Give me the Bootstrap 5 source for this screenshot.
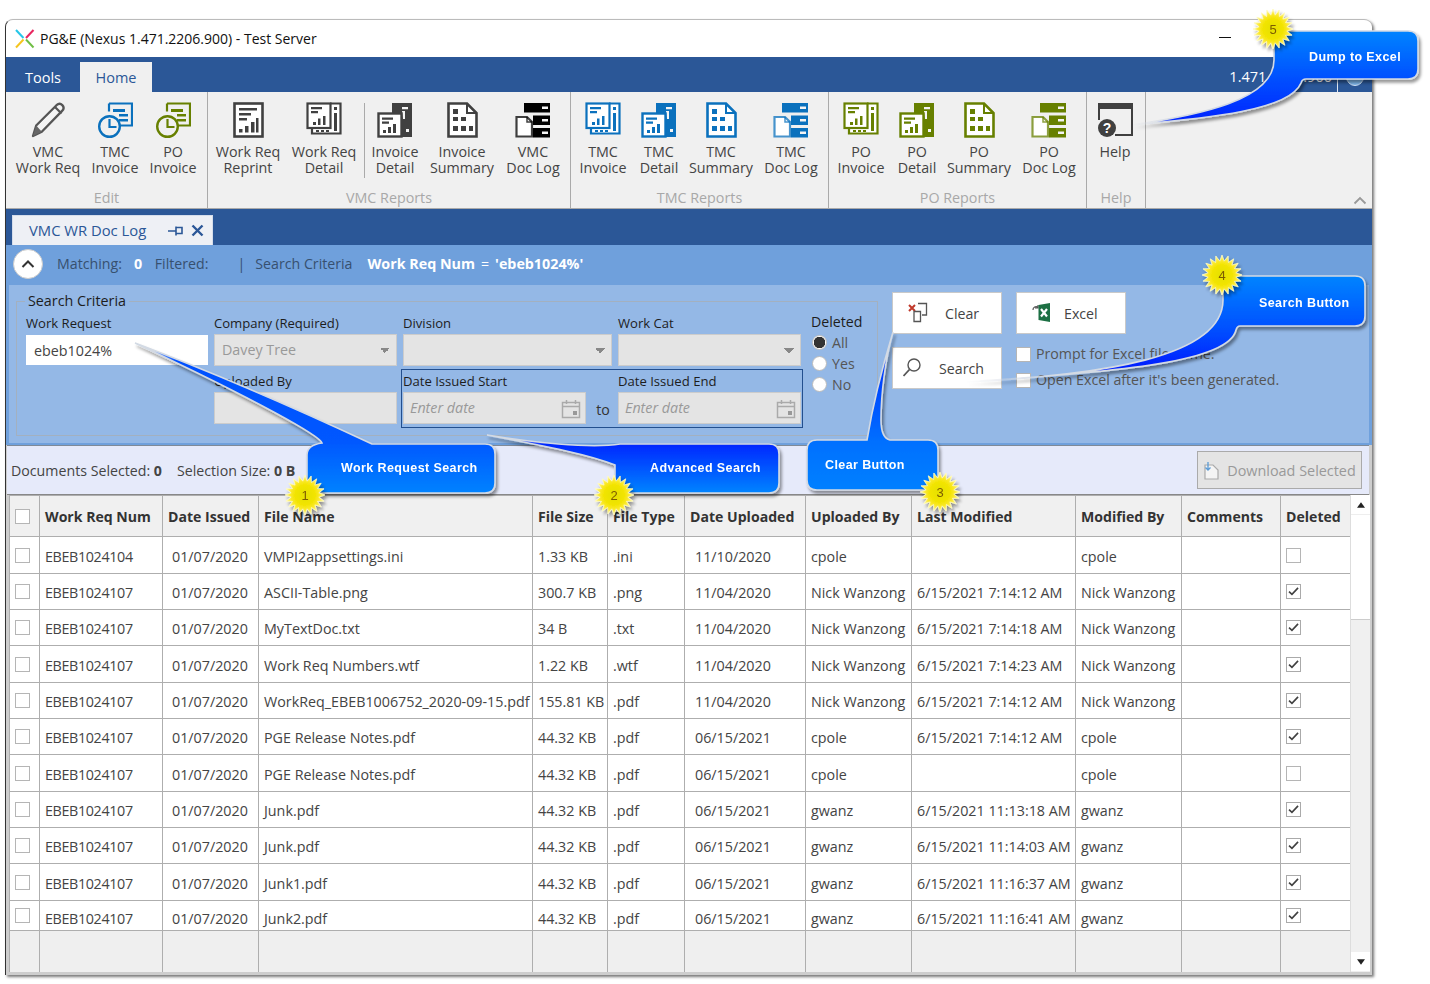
<!DOCTYPE html>
<html lang="en">
<head>
<meta charset="utf-8">
<title>PG&amp;E Nexus</title>
<link href="https://cdn.jsdelivr.net/npm/bootstrap@5.3.0/dist/css/bootstrap.min.css" rel="stylesheet">
<script src="https://cdn.jsdelivr.net/npm/bootstrap@5.3.0/dist/js/bootstrap.bundle.min.js"></script>
<style>
:root{--navy:#2b5797;--sum:#6fa0dc;--pan:#94b8e6;--txt:#444;}
html,body{margin:0;height:984px;width:1430px;overflow:hidden;background:#fff;}
body{position:relative;font-family:"Open Sans","Noto Sans",sans-serif;font-size:14.2px;color:var(--txt);}
.app-win{width:1367px;height:956px;margin:19px 0 0 5px;border-top:1px solid #bbb;border-left:1px solid #333;border-top-left-radius:8px;border-top-right-radius:8px;background:#cdcdcd;box-shadow:2px 2px 3px #777;overflow:hidden;}
.title-row{height:37px;background:#fff;padding-left:9px;color:#111;font-size:14px;}
.logo-s{margin-right:5px;flex:none;}
.title-row .winmin{margin-left:auto;margin-right:141px;width:12px;height:1px;background:#111;margin-top:-2px;}
.tab-row{height:35px;background:var(--navy);color:#fff;padding-top:5px;font-size:14.5px;}
.tab-row .nav-link{padding:0;height:30px;line-height:31px;color:#fff;}
.tab-row .t1{width:74px;text-align:center;margin-right:0;}
.tab-row .t2{width:72px;text-align:center;background:#f0f0f0;color:var(--navy);}
.ver{margin-left:auto;line-height:30px;padding-right:5px;}
.ver-sep{border-left:1px solid #dfe7f3;height:30px;width:35px;display:flex;align-items:center;justify-content:center;}
.ver-dot{width:18px;height:18px;border-radius:50%;background:#7db4e8;border:1px solid #cfe1f5;}
.ribbon{height:117px;background:#f0f0f0;border-bottom:1px solid #aaa;font-size:14.3px;}
.rb-grp{border-right:1px solid #aaa;height:116px;display:flex;flex-direction:column;flex:none;}
.rb-btns{display:flex;height:98px;padding-top:10px;}
.rb-name{text-align:center;color:#a8a8a8;line-height:16px;}
.rb-b{flex:none;display:flex;flex-direction:column;align-items:center;color:#444;line-height:16px;text-align:center;}
.rb-b svg{width:36px;height:36px;margin-bottom:6px;flex:none;}
.c-l{color:#444;}
.rb-sep{flex:none;width:8px;display:flex;justify-content:center;padding-top:1px;}
.rb-sep i{display:block;width:1px;height:75px;background:#aaa;}
.g1{width:202px;}.g2{width:363px;}.g3{width:258px;}.g4{width:258px;}.g5{width:59px;}
.pl-6{padding-left:6px;}.pl-4{padding-left:4px;}
.w54{width:54px;}.w56{width:56px;}.w62{width:62px;}.w68{width:68px;}.w72{width:72px;}.w80{width:80px;}
.c-vmc{color:#404040;}.c-tmc{color:#0b71bd;}.c-po{color:#678000;}
.rb-end{flex:1;display:flex;justify-content:flex-end;align-items:flex-end;padding:0 5px 3px 0;}
.doc-row{height:36px;background:var(--navy);padding:6px 0 0 6px;}
.doc-tab{width:201px;height:30px;background:#eef0f5;border:1px solid #d5ddeb;border-bottom:0;color:var(--navy);display:flex;align-items:center;padding-left:16px;font-size:14.8px;}
.doc-tab svg{flex:none;}
.doc-tab .pin-i{margin-left:auto;margin-right:8px;}
.doc-tab .x-i{margin-right:8px;}
.sum-row{height:40px;background:var(--sum);color:#37506f;padding:0 0 3px 7px;}
.roundbtn{width:30px;height:30px;padding:0;border-radius:50%;background:#fff;border:1px solid #ccc;display:flex;align-items:center;justify-content:center;margin-right:14px;}
.wh{color:#fff;font-weight:700;font-size:14.3px;}
.wh-n{color:#fff;margin:0 6px;}
.sum-row span{white-space:pre;}
.sm-a{margin-left:12px;}.sm-b{margin-left:9px;}.sm-c{margin-left:29px;}.sm-d{margin-left:10px;}.sm-e{margin-left:15px;}
.panel-zone{height:160px;background:var(--sum);padding:0 3px 2px 3px;}
.panel-in{height:158px;background:var(--pan);padding:7px 0 0 7px;display:flex;color:#1d1d1d;}
.crit{position:relative;width:862px;height:135px;margin-top:9px;border:1px solid #a3b0bf;padding:6px 0 0 9px;flex:none;}
.crit-legend{position:absolute;left:8px;top:-10px;background:var(--pan);padding:0 3px;line-height:18px;color:#1d1d1d;font-size:14.3px;}
.crit-grid{display:grid;grid-template-columns:182px 183px 209px 183px 60px;column-gap:6px;grid-template-rows:58px 60px;}
.fld-l{font-size:13.1px;line-height:15px;color:#1d1d1d;height:18px;margin-top:8px;}
.fld-i.form-control,.fld-i.form-select{height:32px;border-radius:0;font-size:14.3px;padding:0 7px;color:#444;border:1px solid #ccc;background-color:#e4e4e4;}
.fld-i.form-select{background-image:linear-gradient(45deg,transparent 50%,#888 50%),linear-gradient(-45deg,transparent 50%,#888 50%);background-size:5px 5px;background-position:right 11px center,right 6px center;background-repeat:no-repeat;color:#999;}
.fld-i.wht{background:#fff;border-color:#fff;height:30px;margin-top:1px;}
.fld-i::placeholder{font-style:italic;color:#999;}
.date-box{grid-column:3 / 5;margin:3px -2px 0 -2px;height:59px;border:1px solid #234f8e;padding:0 1px;}
.date-box .dt-cols{display:grid;grid-template-columns:183px 32px 183px;}
.date-box .fld-l{margin-top:4px;}
.date-box .fld-i.form-control{padding:0 6px 2px;}
.dt-wrap{position:relative;}
.dt-wrap svg{position:absolute;right:5px;top:7px;}
.to-lbl{padding:29px 0 0 2px;text-align:center;color:#333;}
.del-col{grid-row:1 / 3;grid-column:5;padding:2px 0 0 4px;}
.del-col .del-t{line-height:16px;margin-top:4px;margin-bottom:2px;}
.form-check-input.rd{width:15px;height:15px;margin:0 0 0 1px;border:1px solid #bbb;}
.form-check-input.rd:checked{background-color:#fff;border-color:#bbb;background-image:radial-gradient(circle,#333 5.5px,#fff 6px);}
.rd-row{display:flex;align-items:center;gap:5px;height:21px;color:#555;}
.act-grid{margin-left:14px;display:grid;grid-template-columns:110px 110px;column-gap:14px;grid-template-rows:42px auto;row-gap:13px;}
.act-b.btn{width:110px;height:42px;background:#fff;border:1px solid #c9c9c9;border-radius:0;padding:2px 0 0;color:#444;font-size:14.2px;display:flex;align-items:center;}
.act-b svg{flex:none;margin:-2px 15px 0;}
.act-b .ic-x{margin-right:10px;}
.act-b .ic-s{margin:-2px 14px 0 10px;}
.form-check-input.cb{width:15px;height:15px;margin:0;border:1px solid #b5b5b5;border-radius:0;background-color:#fff;flex:none;}
.form-check-input.cb:checked{background-color:#fff;border-color:#aaa;background-size:100% 100%;background-image:url("data:image/svg+xml,%3Csvg xmlns='http://www.w3.org/2000/svg' viewBox='0 0 16 16'%3E%3Cpath d='M2.5 8.2l3.6 3.4L13.6 3.6' fill='none' stroke='%23404040' stroke-width='2'/%3E%3C/svg%3E");}
.opt-col{display:flex;flex-direction:column;gap:10px;margin-top:-1px;}
.opt-row{display:flex;align-items:center;gap:5px;height:16px;white-space:nowrap;color:#555;width:300px;}
.sel-row{height:50px;background:#e6eafa;border-top:1px solid #7f8a98;border-bottom:1px solid #888;margin-left:1px;margin-right:3px;padding:0 7px 0 4px;}
.sel-row b{font-weight:700;}
.sel-t{padding-top:2px;}
.sel-t2{margin-left:15px;}
.dl-btn.btn{width:165px;height:38px;border-radius:0;background:#e4e4e4;border:1px solid #aaa;color:#999;font-size:14.4px;padding:1px 0 0;display:flex;align-items:center;justify-content:center;gap:7px;opacity:1;white-space:nowrap;}
.grid-zone{height:477px;padding-left:3px;padding-right:2px;}
.grid-scroll{width:1341px;height:477px;background:#efefef;overflow:hidden;flex:none;position:relative;}
.dg.table{table-layout:fixed;width:1342px;margin:0;border-collapse:collapse;--bs-table-bg:transparent;--bs-table-border-color:#aeaeae;color:var(--txt);}
.dg th,.dg td{padding:0 0 0 5px;border:1px solid #aeaeae;font-weight:400;white-space:nowrap;overflow:hidden;vertical-align:middle;font-size:14.3px;box-shadow:none;}
.dg thead th{height:41px;background:#f0f0f0;font-weight:700;color:#333;padding-top:2px;font-size:14.1px;}
.dg tbody tr.dr td{background:#fff;height:36px;padding-top:3px;}
.dg tbody tr.dr td:nth-child(2){letter-spacing:-.35px;}
.dg tbody tr.dr:nth-child(3n+1) td{height:37px;}
.dg tbody tr.lastr td{height:30px;padding-top:7px;}
.dg tbody tr.fill td{height:42px;background:#efefef;}
.dg td.pd{padding-left:9px;}
.dg td.pu{padding-left:10px;}
.dg thead th.chk,.dg tbody tr.dr td.chk{padding:0 0 0 5px;}
.dg td.chk .form-check-input,.dg th.chk .form-check-input{display:block;margin-top:0;}
.sb{width:20px;height:477px;background:#f0f0f0;border-left:1px solid #ddd;display:flex;flex-direction:column;flex:none;}
.sb-a{height:20px;background:#fff;border-bottom:1px solid #eee;display:flex;align-items:center;justify-content:center;flex:none;}
.sb-t{height:105px;background:#fff;border-bottom:1px solid #ccc;flex:none;}
.sb-s{flex:1;}
.overlay{position:absolute;left:0;top:0;width:1430px;height:984px;pointer-events:none;}
.bb{font-family:"Liberation Sans",Arial,sans-serif;font-weight:700;font-size:12.5px;fill:#fff;letter-spacing:.4px;}
.sn{font-family:"Liberation Sans",sans-serif;font-size:13px;fill:#7d5c00;text-anchor:middle;}
</style>
</head>
<body>
<svg width="0" height="0" class="position-absolute">
<defs>
<symbol id="i-pencil" viewBox="0 0 36 36"><path d="M3 34l3.2-10.5L26.5 3.2c2-1.8 4.2-1.8 5.8-.1 1.7 1.8 1.600 4-.2 5.800L11.800 29.800z" fill="#f4f4f4" stroke="#555" stroke-width="2.300" stroke-linejoin="round"/><path d="M3 34l3.200-10.500 5.600 6.300z" fill="#666"/><path d="M25 5l6.500 6.500" stroke="#555" stroke-width="2.200"/></symbol>
<symbol id="i-clock" viewBox="0 0 36 36"><path d="M12 1.500h23v22H20M12 1.500v8" fill="none" stroke="currentColor" stroke-width="2.200"/><path d="M16 7h12v3H16zM22 12h9v2.500h-9zM22 17h9v2.500h-9z" fill="currentColor"/><circle cx="12.500" cy="24.500" r="10.300" fill="#f0f0f0" stroke="currentColor" stroke-width="2.400"/><path d="M12.500 17v8h7" fill="none" stroke="currentColor" stroke-width="2.200"/></symbol>
<symbol id="i-report" viewBox="0 0 36 36"><rect x="4.500" y="1.500" width="28" height="33" fill="#fff" stroke="currentColor" stroke-width="2.600"/><path d="M9 6h18v2.500H9zM9 11h12v2.500H9zM9 16h8v2.500H9zM9 27h3.500v3.500H9zM15 24h3.500v6.500H15zM21 20h3.500v10.500H21zM26 16h2.500v14.500H26z" fill="currentColor"/></symbol>
<symbol id="i-multi" viewBox="0 0 36 36"><path d="M24 1.500h10.500v30H6V26" fill="#fff" stroke="currentColor" stroke-width="2.200"/><rect x="1.500" y="1.500" width="23" height="24.500" fill="#fff" stroke="currentColor" stroke-width="2.200"/><path d="M5 5h11v2.300H5zM5 9h7v2.300H5zM7 20h3v3H7zM12 16.500h2.500v6.500H12zM17 14h2.500v9H17zM28 5h3v3h-3zM28 11h3v18h-3zM10 28h3v2h-3zM15 28h3v2h-3zM20 28h3v2h-3z" fill="currentColor"/></symbol>
<symbol id="i-inv" viewBox="0 0 36 36"><path d="M15 1h20v34H15z" fill="currentColor"/><path d="M25 5h6v2.200h-6zM25 9h3v8h-2zM29 27h3v3h-3z" fill="#f4f4f4"/><rect x="1.500" y="11.500" width="23" height="23" fill="#fff" stroke="currentColor" stroke-width="2.400"/><path d="M5 15.500h11v2.300H5zM5 19.500h7v2.300H5zM6 28h3v3H6zM11 25h3v6h-3zM16 22h3v9h-3z" fill="currentColor"/></symbol>
<symbol id="i-sum" viewBox="0 0 36 36"><path d="M4.500 1.500H23l9.500 9.500v23.500h-28z" fill="#fff" stroke="currentColor" stroke-width="2.600"/><path d="M23 1.500v9.500h9.500" fill="none" stroke="currentColor" stroke-width="2"/><path d="M9 7h5v5H9zM9 15h5v4H9zM17 15h5v4h-5zM9 24h5v5H9zM17 24h5v5h-5zM25 24h4v5h-4z" fill="currentColor"/></symbol>
<symbol id="i-log" viewBox="0 0 36 36"><path d="M9 1h26v9.500H9zM18 13.500h17v9.500H18zM18 26h17v9.500H18z" fill="currentColor"/><path d="M27 4.500h6v2.500h-6zM27 17h6v2.500h-6zM27 29.500h6V32h-6z" fill="#f4f4f4"/><path d="M1.500 15H12l5 5v14.500H1.500z" fill="#fff" stroke="currentColor" stroke-opacity=".75" stroke-width="2.200"/><path d="M12 15v5h5" fill="none" stroke="currentColor" stroke-opacity=".75" stroke-width="1.500"/></symbol>
<symbol id="i-help" viewBox="0 0 36 36"><path d="M2 5v13M35 4v29H18" fill="none" stroke="#404040" stroke-width="2"/><path d="M1 1h35v6H1z" fill="#404040"/><circle cx="10" cy="26" r="9" fill="#404040"/><text x="10" y="31" text-anchor="middle" font-family="Liberation Sans" font-weight="700" font-size="14" fill="#fff">?</text></symbol>
<symbol id="i-cal" viewBox="0 0 20 20"><rect x="1.500" y="3.500" width="17" height="15" fill="none" stroke="#aaa" stroke-width="1.500"/><path d="M1.500 7.500h17" stroke="#aaa" stroke-width="1.500"/><path d="M5.500 1v4M14.500 1v4" stroke="#aaa" stroke-width="1.500"/><rect x="12" y="12" width="4" height="4" fill="#999"/></symbol>
<symbol id="i-star" viewBox="-22 -22 44 44"><polygon points="20,0 13.83,2.19 19.02,6.18 12.47,6.36 16.18,11.76 9.9,9.9 11.76,16.18 6.36,12.47 6.18,19.02 2.19,13.83 0,20 -2.19,13.83 -6.18,19.02 -6.36,12.47 -11.76,16.18 -9.9,9.9 -16.18,11.76 -12.47,6.36 -19.02,6.18 -13.83,2.19 -20,0 -13.83,-2.19 -19.02,-6.18 -12.47,-6.36 -16.18,-11.76 -9.9,-9.9 -11.76,-16.18 -6.36,-12.47 -6.18,-19.02 -2.19,-13.83 0,-20 2.19,-13.83 6.18,-19.02 6.36,-12.47 11.76,-16.18 9.9,-9.9 16.18,-11.76 12.47,-6.36 19.02,-6.18 13.83,-2.19" fill="url(#gstar)" stroke="#fffbc0" stroke-width=".8"/></symbol>
<radialGradient id="gstar" gradientUnits="userSpaceOnUse" cx="0" cy="0" r="20"><stop offset="0" stop-color="#e4e000"/><stop offset=".5" stop-color="#f2e400"/><stop offset=".72" stop-color="#fbe92c"/><stop offset="1" stop-color="#fff7a8"/></radialGradient>
</defs>
</svg>

<div class="app-win d-flex flex-column">
  <div class="title-row d-flex align-items-center">
    <svg width="20" height="20" viewBox="0 0 20 20" class="logo-s"><path d="M1 1l7.500 8" stroke="#25c6e8" stroke-width="2"/><path d="M18.500 1l-7.500 8" stroke="#e8265f" stroke-width="2"/><path d="M1 18.500l7.500-8" stroke="#f5c51e" stroke-width="2"/><path d="M18.500 18.500l-7.500-8" stroke="#6fbe44" stroke-width="2"/></svg>
    <span>PG&amp;E (Nexus 1.471.2206.900) - Test Server</span>
    <div class="winmin"></div>
  </div>
  <div class="tab-row d-flex">
    <ul class="nav w-100">
      <li class="nav-item"><a class="nav-link t1" href="#">Tools</a></li>
      <li class="nav-item"><a class="nav-link t2" href="#">Home</a></li>
      <li class="ver">1.471.2206.900</li>
      <li class="ver-sep"><span class="ver-dot"></span></li>
    </ul>
  </div>
  <div class="ribbon d-flex">
    <div class="rb-grp g1"><div class="rb-btns pl-6">
      <div class="rb-b w72"><svg><use href="#i-pencil"/></svg>VMC<br>Work Req</div>
      <div class="rb-b w62 c-tmc"><svg><use href="#i-clock"/></svg><span class="c-l">TMC<br>Invoice</span></div>
      <div class="rb-b w54 c-po"><svg><use href="#i-clock"/></svg><span class="c-l">PO<br>Invoice</span></div>
    </div><div class="rb-name">Edit</div></div>
    <div class="rb-grp g2"><div class="rb-btns">
      <div class="rb-b w80 c-vmc"><svg><use href="#i-report"/></svg><span class="c-l">Work Req<br>Reprint</span></div>
      <div class="rb-b w72 c-vmc"><svg><use href="#i-multi"/></svg><span class="c-l">Work Req<br>Detail</span></div>
      <div class="rb-sep"><i></i></div>
      <div class="rb-b w54 c-vmc"><svg><use href="#i-inv"/></svg><span class="c-l">Invoice<br>Detail</span></div>
      <div class="rb-b w80 c-vmc"><svg><use href="#i-sum"/></svg><span class="c-l">Invoice<br>Summary</span></div>
      <div class="rb-b w62"><svg class="text-black"><use href="#i-log"/></svg>VMC<br>Doc Log</div>
    </div><div class="rb-name">VMC Reports</div></div>
    <div class="rb-grp g3"><div class="rb-btns pl-4">
      <div class="rb-b w56 c-tmc"><svg><use href="#i-multi"/></svg><span class="c-l">TMC<br>Invoice</span></div>
      <div class="rb-b w56 c-tmc"><svg><use href="#i-inv"/></svg><span class="c-l">TMC<br>Detail</span></div>
      <div class="rb-b w68 c-tmc"><svg><use href="#i-sum"/></svg><span class="c-l">TMC<br>Summary</span></div>
      <div class="rb-b w72 c-tmc"><svg><use href="#i-log"/></svg><span class="c-l">TMC<br>Doc Log</span></div>
    </div><div class="rb-name">TMC Reports</div></div>
    <div class="rb-grp g4"><div class="rb-btns pl-4">
      <div class="rb-b w56 c-po"><svg><use href="#i-multi"/></svg><span class="c-l">PO<br>Invoice</span></div>
      <div class="rb-b w56 c-po"><svg><use href="#i-inv"/></svg><span class="c-l">PO<br>Detail</span></div>
      <div class="rb-b w68 c-po"><svg><use href="#i-sum"/></svg><span class="c-l">PO<br>Summary</span></div>
      <div class="rb-b w72 c-po"><svg><use href="#i-log"/></svg><span class="c-l">PO<br>Doc Log</span></div>
    </div><div class="rb-name">PO Reports</div></div>
    <div class="rb-grp g5"><div class="rb-btns">
      <div class="rb-b w56"><svg><use href="#i-help"/></svg>Help</div>
    </div><div class="rb-name">Help</div></div>
    <div class="rb-end"><svg width="14" height="9" viewBox="0 0 14 9"><path d="M1.500 7.500L7 2l5.500 5.500" fill="none" stroke="#999" stroke-width="1.800"/></svg></div>
  </div>
  <div class="doc-row">
    <div class="doc-tab"><span>VMC WR Doc Log</span>
      <svg width="15" height="12" viewBox="0 0 15 12" class="pin-i"><path d="M0 6h8M8 1.500v9M8 2.500h6v6H8" fill="none" stroke="#2b5797" stroke-width="1.600"/></svg>
      <svg width="13" height="13" viewBox="0 0 13 13" class="x-i"><path d="M1.500 1.500l10 10M11.500 1.500l-10 10" stroke="#2b5797" stroke-width="2.400"/></svg>
    </div>
  </div>
  <div class="sum-row d-flex align-items-center">
    <button class="roundbtn" type="button"><svg width="14" height="10" viewBox="0 0 14 10"><path d="M1.500 8L7 2.500 12.500 8" fill="none" stroke="#333" stroke-width="2"/></svg></button>
    <span>Matching:</span><span class="wh sm-a">0</span><span class="sm-b">&nbsp;Filtered:</span><span class="sm-c">|</span><span class="sm-d">Search Criteria</span><span class="wh sm-e">Work Req Num</span><span class="wh-n">=</span><span class="wh">'ebeb1024%'</span>
  </div>
  <div class="panel-zone">
    <div class="panel-in">
      <div class="crit">
        <div class="crit-legend">Search Criteria</div>
        <div class="crit-grid">
          <div><div class="fld-l">Work Request</div><input class="form-control fld-i wht" value="ebeb1024%"></div>
          <div><div class="fld-l">Company (Required)</div><select class="form-select fld-i" disabled><option>Davey Tree</option></select></div>
          <div><div class="fld-l">Division</div><select class="form-select fld-i" disabled><option></option></select></div>
          <div><div class="fld-l">Work Cat</div><select class="form-select fld-i" disabled><option></option></select></div>
          <div class="del-col"><div class="del-t">Deleted</div>
            <div class="rd-row"><input class="form-check-input rd" type="radio" name="d" checked>All</div>
            <div class="rd-row"><input class="form-check-input rd" type="radio" name="d">Yes</div>
            <div class="rd-row"><input class="form-check-input rd" type="radio" name="d">No</div>
          </div>
          <div></div>
          <div><div class="fld-l">Uploaded By</div><input class="form-control fld-i" disabled></div>
          <div class="date-box"><div class="dt-cols">
            <div><div class="fld-l">Date Issued Start</div><div class="dt-wrap"><input class="form-control fld-i" placeholder="Enter date" disabled><svg width="20" height="20"><use href="#i-cal"/></svg></div></div>
            <div class="to-lbl">to</div>
            <div><div class="fld-l">Date Issued End</div><div class="dt-wrap"><input class="form-control fld-i" placeholder="Enter date" disabled><svg width="20" height="20"><use href="#i-cal"/></svg></div></div>
          </div></div>
        </div>
      </div>
      <div class="act-grid">
        <button class="btn act-b" type="button"><svg width="22" height="22" viewBox="0 0 22 22"><path d="M1 3l6 6M7 3L1 9" stroke="#c0392b" stroke-width="2"/><path d="M10 1.500h8.500V13H14" fill="none" stroke="#555" stroke-width="1.300"/><path d="M6 9.500h6.500v10H6z" fill="#fff" stroke="#555" stroke-width="1.300"/></svg>Clear</button>
        <button class="btn act-b" type="button"><svg width="22" height="22" viewBox="0 0 22 22" class="ic-x"><path d="M1 8a3 3 0 0 1 5-2.500M6 3v3H3" fill="none" stroke="#555" stroke-width="1.200"/><path d="M6.500 3L18 1v19L6.500 18z" fill="#1d7044"/><path d="M9 7l6 7.500M15 7l-6 7.500" stroke="#fff" stroke-width="2.200"/></svg>Excel</button>
        <button class="btn act-b" type="button"><svg width="22" height="22" viewBox="0 0 22 22" class="ic-s"><circle cx="11" cy="8" r="6" fill="none" stroke="#555" stroke-width="1.400"/><path d="M6.500 12.500L0.500 19" stroke="#555" stroke-width="1.800"/></svg>Search</button>
        <div class="opt-col">
          <label class="opt-row"><input class="form-check-input cb" type="checkbox">Prompt for Excel file name.</label>
          <label class="opt-row"><input class="form-check-input cb" type="checkbox">Open Excel after it's been generated.</label>
        </div>
      </div>
    </div>
  </div>
  <div class="sel-row d-flex align-items-center">
    <span class="sel-t">Documents Selected: <b>0</b></span><span class="sel-t sel-t2">Selection Size: <b>0 B</b></span>
    <button class="btn dl-btn ms-auto" type="button" disabled><svg width="17" height="18" viewBox="0 0 17 18"><path d="M2 3h8l5 5v9H2z" fill="#f4f4f4" stroke="#aaa" stroke-width="1.200"/><path d="M5 0v8M2.500 5.500L5 8l2.500-2.500" fill="none" stroke="#5b9bd5" stroke-width="1.300"/></svg>Download Selected</button>
  </div>
  <div class="grid-zone d-flex">
    <div class="grid-scroll">
      <table class="table dg">
        <colgroup><col style="width:30px"><col style="width:123px"><col style="width:96px"><col style="width:274px"><col style="width:75px"><col style="width:77px"><col style="width:121px"><col style="width:106px"><col style="width:164px"><col style="width:106px"><col style="width:99px"><col style="width:71px"></colgroup>
        <thead><tr><th class="chk"><input class="form-check-input cb" type="checkbox"></th><th>Work Req Num</th><th>Date Issued</th><th>File Name</th><th>File Size</th><th>File Type</th><th>Date Uploaded</th><th>Uploaded By</th><th>Last Modified</th><th>Modified By</th><th>Comments</th><th>Deleted</th></tr></thead>
        <tbody>
        <tr class="dr"><td class="chk"><input class="form-check-input cb" type="checkbox"></td><td>EBEB1024104</td><td class="pd">01/07/2020</td><td>VMPI2appsettings.ini</td><td>1.33 KB</td><td>.ini</td><td class="pu">11/10/2020</td><td>cpole</td><td></td><td>cpole</td><td></td><td class="chk"><input class="form-check-input cb" type="checkbox"></td></tr>
        <tr class="dr"><td class="chk"><input class="form-check-input cb" type="checkbox"></td><td>EBEB1024107</td><td class="pd">01/07/2020</td><td>ASCII-Table.png</td><td>300.7 KB</td><td>.png</td><td class="pu">11/04/2020</td><td>Nick Wanzong</td><td>6/15/2021 7:14:12 AM</td><td>Nick Wanzong</td><td></td><td class="chk"><input class="form-check-input cb" type="checkbox" checked></td></tr>
        <tr class="dr"><td class="chk"><input class="form-check-input cb" type="checkbox"></td><td>EBEB1024107</td><td class="pd">01/07/2020</td><td>MyTextDoc.txt</td><td>34 B</td><td>.txt</td><td class="pu">11/04/2020</td><td>Nick Wanzong</td><td>6/15/2021 7:14:18 AM</td><td>Nick Wanzong</td><td></td><td class="chk"><input class="form-check-input cb" type="checkbox" checked></td></tr>
        <tr class="dr"><td class="chk"><input class="form-check-input cb" type="checkbox"></td><td>EBEB1024107</td><td class="pd">01/07/2020</td><td>Work Req Numbers.wtf</td><td>1.22 KB</td><td>.wtf</td><td class="pu">11/04/2020</td><td>Nick Wanzong</td><td>6/15/2021 7:14:23 AM</td><td>Nick Wanzong</td><td></td><td class="chk"><input class="form-check-input cb" type="checkbox" checked></td></tr>
        <tr class="dr"><td class="chk"><input class="form-check-input cb" type="checkbox"></td><td>EBEB1024107</td><td class="pd">01/07/2020</td><td>WorkReq_EBEB1006752_2020-09-15.pdf</td><td>155.81 KB</td><td>.pdf</td><td class="pu">11/04/2020</td><td>Nick Wanzong</td><td>6/15/2021 7:14:12 AM</td><td>Nick Wanzong</td><td></td><td class="chk"><input class="form-check-input cb" type="checkbox" checked></td></tr>
        <tr class="dr"><td class="chk"><input class="form-check-input cb" type="checkbox"></td><td>EBEB1024107</td><td class="pd">01/07/2020</td><td>PGE Release Notes.pdf</td><td>44.32 KB</td><td>.pdf</td><td class="pu">06/15/2021</td><td>cpole</td><td>6/15/2021 7:14:12 AM</td><td>cpole</td><td></td><td class="chk"><input class="form-check-input cb" type="checkbox" checked></td></tr>
        <tr class="dr"><td class="chk"><input class="form-check-input cb" type="checkbox"></td><td>EBEB1024107</td><td class="pd">01/07/2020</td><td>PGE Release Notes.pdf</td><td>44.32 KB</td><td>.pdf</td><td class="pu">06/15/2021</td><td>cpole</td><td></td><td>cpole</td><td></td><td class="chk"><input class="form-check-input cb" type="checkbox"></td></tr>
        <tr class="dr"><td class="chk"><input class="form-check-input cb" type="checkbox"></td><td>EBEB1024107</td><td class="pd">01/07/2020</td><td>Junk.pdf</td><td>44.32 KB</td><td>.pdf</td><td class="pu">06/15/2021</td><td>gwanz</td><td>6/15/2021 11:13:18 AM</td><td>gwanz</td><td></td><td class="chk"><input class="form-check-input cb" type="checkbox" checked></td></tr>
        <tr class="dr"><td class="chk"><input class="form-check-input cb" type="checkbox"></td><td>EBEB1024107</td><td class="pd">01/07/2020</td><td>Junk.pdf</td><td>44.32 KB</td><td>.pdf</td><td class="pu">06/15/2021</td><td>gwanz</td><td>6/15/2021 11:14:03 AM</td><td>gwanz</td><td></td><td class="chk"><input class="form-check-input cb" type="checkbox" checked></td></tr>
        <tr class="dr"><td class="chk"><input class="form-check-input cb" type="checkbox"></td><td>EBEB1024107</td><td class="pd">01/07/2020</td><td>Junk1.pdf</td><td>44.32 KB</td><td>.pdf</td><td class="pu">06/15/2021</td><td>gwanz</td><td>6/15/2021 11:16:37 AM</td><td>gwanz</td><td></td><td class="chk"><input class="form-check-input cb" type="checkbox" checked></td></tr>
        <tr class="dr lastr"><td class="chk"><input class="form-check-input cb" type="checkbox"></td><td>EBEB1024107</td><td class="pd">01/07/2020</td><td>Junk2.pdf</td><td>44.32 KB</td><td>.pdf</td><td class="pu">06/15/2021</td><td>gwanz</td><td>6/15/2021 11:16:41 AM</td><td>gwanz</td><td></td><td class="chk"><input class="form-check-input cb" type="checkbox" checked></td></tr>
        <tr class="fill"><td></td><td></td><td></td><td></td><td></td><td></td><td></td><td></td><td></td><td></td><td></td><td></td></tr>
        </tbody>
      </table>
    </div>
    <div class="sb">
      <div class="sb-a"><svg width="8" height="6" viewBox="0 0 10 7"><path d="M5 0l5 7H0z" fill="#222"/></svg></div>
      <div class="sb-t"></div>
      <div class="sb-s"></div>
      <div class="sb-a"><svg width="8" height="6" viewBox="0 0 10 7"><path d="M5 7L0 0h10z" fill="#222"/></svg></div>
    </div>
  </div>
</div>

<svg class="overlay" viewBox="0 0 1430 984">
  <defs>
    <filter id="sh" x="-10%" y="-10%" width="125%" height="130%"><feDropShadow dx="2" dy="3" stdDeviation="1.500" flood-color="#000" flood-opacity=".4"/></filter>
    <linearGradient id="g1" gradientUnits="userSpaceOnUse" x1="0" y1="343" x2="0" y2="493"><stop offset="0" stop-color="#e8f0ff"/><stop offset=".12" stop-color="#0050ff"/><stop offset=".66" stop-color="#0058ff"/><stop offset="1" stop-color="#0082ff"/></linearGradient>
    <linearGradient id="g2" gradientUnits="userSpaceOnUse" x1="0" y1="434" x2="0" y2="493"><stop offset="0" stop-color="#cfe0ff"/><stop offset=".18" stop-color="#0028ff"/><stop offset="1" stop-color="#0084ff"/></linearGradient>
    <linearGradient id="g3" gradientUnits="userSpaceOnUse" x1="0" y1="332" x2="0" y2="490"><stop offset="0" stop-color="#dfe8ff"/><stop offset=".2" stop-color="#0038ff"/><stop offset=".7" stop-color="#0070ff"/><stop offset="1" stop-color="#0080ff"/></linearGradient>
    <linearGradient id="g4" gradientUnits="userSpaceOnUse" x1="0" y1="276" x2="0" y2="382"><stop offset="0" stop-color="#0084ff"/><stop offset=".5" stop-color="#0050ff"/><stop offset=".85" stop-color="#0020ff"/><stop offset="1" stop-color="#0020ff"/></linearGradient>
    <linearGradient id="g5" gradientUnits="userSpaceOnUse" x1="0" y1="31" x2="0" y2="125"><stop offset="0" stop-color="#0084ff"/><stop offset=".5" stop-color="#0050ff"/><stop offset="1" stop-color="#0020ff"/></linearGradient>
    <linearGradient id="m4" gradientUnits="userSpaceOnUse" x1="965" y1="0" x2="1050" y2="0"><stop offset="0" stop-color="#000"/><stop offset="1" stop-color="#fff"/></linearGradient>
    <linearGradient id="m5" gradientUnits="userSpaceOnUse" x1="1132" y1="0" x2="1175" y2="0"><stop offset="0" stop-color="#000"/><stop offset="1" stop-color="#fff"/></linearGradient>
    <mask id="mk4" maskUnits="userSpaceOnUse" x="900" y="260" width="500" height="140"><rect x="900" y="260" width="500" height="140" fill="url(#m4)"/></mask>
    <mask id="mk5" maskUnits="userSpaceOnUse" x="1100" y="20" width="330" height="120"><rect x="1100" y="20" width="330" height="120" fill="url(#m5)"/></mask>
  </defs>
  <g filter="url(#sh)" stroke="#d3dae4" stroke-width="1.600">
    <path fill="url(#g1)" d="M135 343C220 375 310 415 372 444L485 444Q495 444 495 454L495 483Q495 493 485 493L317 493Q307 493 307 483L307 455Q307 445 322 443C320 436 260 402 135 343Z"/>
    <path fill="url(#g2)" d="M487 435C530 442 590 449 620 444L769 444Q779 444 779 454L779 483Q779 493 769 493L625 493Q615 493 615 483L615 465C590 455 550 447 487 435Z"/>
    <path fill="url(#g3)" d="M893 332C880 375 872 410 867 440L817 440Q807 440 807 450L807 480Q807 490 817 490L928 490Q938 490 938 480L938 450Q938 440 928 440L890 440Q881 438 881 420C881 395 885 360 893 332Z"/>
    <path fill="url(#g4)" mask="url(#mk4)" d="M967 382C1100 375 1223 358 1223 300L1223 286Q1223 276 1233 276L1355 276Q1365 276 1365 286L1365 316Q1365 326 1355 326L1240 326Q1237 326 1236 330C1228 365 1100 372 967 382Z"/>
    <path fill="url(#g5)" mask="url(#mk5)" d="M1132 125C1200 115 1274 100 1274 60L1274 41Q1274 31 1284 31L1408 31Q1418 31 1418 41L1418 69Q1418 79 1408 79L1306 79Q1302 79 1301 83C1290 110 1210 118 1132 125Z"/>
  </g>
  <text class="bb" x="341" y="472">Work Request Search</text>
  <text class="bb" x="650" y="472">Advanced Search</text>
  <text class="bb" x="825" y="469">Clear Button</text>
  <text class="bb" x="1259" y="307">Search Button</text>
  <text class="bb" x="1309" y="61">Dump to Excel</text>
  <g filter="url(#sh)">
    <use href="#i-star" x="283" y="473" width="44" height="44"/>
    <use href="#i-star" x="592" y="473" width="44" height="44"/>
    <use href="#i-star" x="918" y="470" width="44" height="44"/>
    <use href="#i-star" x="1200" y="253" width="44" height="44"/>
    <use href="#i-star" x="1251" y="7" width="44" height="44"/>
  </g>
  <text class="sn" x="305" y="500">1</text>
  <text class="sn" x="614" y="500">2</text>
  <text class="sn" x="940" y="497">3</text>
  <text class="sn" x="1222" y="280">4</text>
  <text class="sn" x="1273" y="34">5</text>
</svg>
</body>
</html>
